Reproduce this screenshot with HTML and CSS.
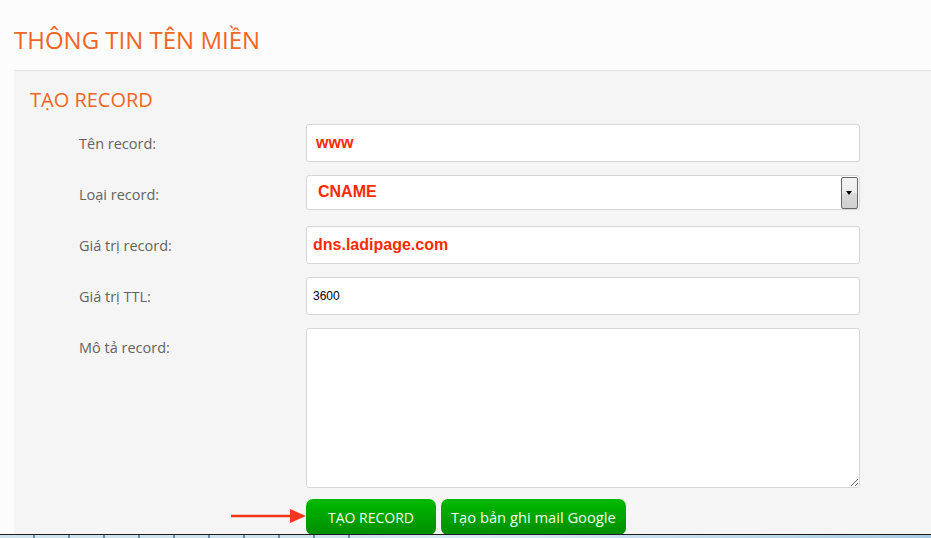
FILE: index.html
```html
<!DOCTYPE html>
<html lang="vi">
<head>
    <meta charset="UTF-8">
    <meta name="viewport" content="width=device-width, initial-scale=1.0">
    <title>Thông tin tên miền</title>
    <link rel="stylesheet" href="styles.css">
</head>
<body>
    <div class="page">
        <div class="page-header">
            <h1>THÔNG TIN TÊN MIỀN</h1>
        </div>

        <div class="panel">
            <h2>TẠO RECORD</h2>

            <div class="form-row">
                <label for="recordName">Tên record:</label>
                <input type="text" id="recordName" class="field field-red field-www" value="www">
            </div>

            <div class="form-row">
                <label>Loại record:</label>
                <div class="select-box">
                    <span class="select-value">CNAME</span>
                    <span class="select-btn"></span>
                </div>
            </div>

            <div class="form-row">
                <label for="recordValue">Giá trị record:</label>
                <input type="text" id="recordValue" class="field field-red" value="dns.ladipage.com">
            </div>

            <div class="form-row">
                <label for="recordTtl">Giá trị TTL:</label>
                <input type="text" id="recordTtl" class="field" value="3600">
            </div>

            <div class="form-row">
                <label for="recordDesc">Mô tả record:</label>
                <textarea id="recordDesc" class="field field-area"></textarea>
            </div>

            <div class="actions">
                <!-- mũi tên chú thích -->
                <svg class="arrow" width="76" height="16" viewBox="0 0 76 16">
                    <line x1="0" y1="8" x2="62" y2="8" stroke="#f2361c" stroke-width="2.5"/>
                    <polygon points="59,1 75,8 59,15" fill="#f2361c"/>
                </svg>
                <button class="green-btn">TẠO RECORD</button>
                <button class="green-btn green-btn-wide">Tạo bản ghi mail Google</button>
            </div>
        </div>
    </div>

    <div class="taskbar"></div>
</body>
</html>
```

FILE: styles.css
```css
html, body {
    height: 100%;
}
body {
    margin: 0;
    background-color: #fcfcfc;
    font-family: "Open Sans", "Noto Sans", Arial, sans-serif;
    overflow: hidden;
}
.page {
    display: flex;
    flex-direction: column;
    height: 100%;
    margin-left: 14px;
}
.page-header {
    padding: 24px 0 14px;
    border-bottom: 1px solid #e3e3e3;
}
h1 {
    margin: 0;
    font-size: 24px;
    line-height: 32px;
    font-weight: normal;
    color: #f26522;
}
.panel {
    flex: 1;
    background-color: #f5f5f5;
    padding: 15px 0 0 16px;
}
h2 {
    margin: 0 0 11px;
    font-size: 20px;
    line-height: 27px;
    font-weight: normal;
    color: #f26522;
}
.form-row {
    display: flex;
    align-items: flex-start;
    padding-left: 49px;
    margin-bottom: 13px;
}
.form-row label {
    width: 227px;
    flex-shrink: 0;
    height: 38px;
    padding-top: 1px;
    box-sizing: border-box;
    line-height: 38px;
    font-size: 14.5px;
    color: #636363;
}
.field {
    box-sizing: border-box;
    width: 554px;
    height: 38px;
    margin: 0;
    padding: 0 6px;
    border: 1px solid #d6d6d6;
    border-radius: 3px;
    background-color: #fff;
    font-family: "Liberation Sans", Arial, sans-serif;
    font-size: 12px;
    color: #000;
    outline: none;
}
.field-red {
    font-size: 16px;
    font-weight: bold;
    color: #ff2a00;
}
.field-www {
    padding-left: 9px;
}
.field-area {
    height: 160px;
    resize: both;
}
.select-box {
    box-sizing: border-box;
    width: 554px;
    height: 35px;
    display: flex;
    align-items: center;
    justify-content: space-between;
    padding: 0 1px 0 11px;
    border: 1px solid #d6d6d6;
    border-radius: 3px;
    background-color: #fff;
}
.select-value {
    font-family: "Liberation Sans", Arial, sans-serif;
    font-size: 16px;
    font-weight: bold;
    color: #ff2a00;
    margin-top: -2px;
}
.select-btn {
    box-sizing: border-box;
    width: 17px;
    height: 32px;
    border: 1px solid #666;
    border-radius: 2px;
    background: linear-gradient(#f4f4f4 0%, #ececec 48%, #dadada 52%, #cfcfcf 100%);
    position: relative;
}
.select-btn::after {
    content: "";
    position: absolute;
    left: 4px;
    top: 13px;
    border-left: 3.5px solid transparent;
    border-right: 3.5px solid transparent;
    border-top: 4px solid #000;
}
.actions {
    position: relative;
    display: flex;
    gap: 5px;
    padding-left: 276px;
    margin-top: -2px;
}
.arrow {
    position: absolute;
    left: 201px;
    top: 9px;
}
.green-btn {
    height: 36px;
    padding: 0 22px;
    border: none;
    border-radius: 7px;
    background: linear-gradient(#00ba00, #008c00);
    font-family: "Open Sans", Arial, sans-serif;
    font-size: 14px;
    color: #f2ffe8;
    cursor: pointer;
}
.green-btn-wide {
    padding: 0 10px;
    font-size: 14.7px;
}
.taskbar {
    position: fixed;
    left: 0;
    right: 0;
    bottom: 0;
    height: 3px;
    border-top: 1px solid #1c1c1c;
    background:
        repeating-linear-gradient(to right, #cfe3ef 0, #cfe3ef 33px, #6b8ea6 33px, #6b8ea6 35px) left / 363px 100% no-repeat,
        linear-gradient(to right, #a9cbe2, #d8ebf6 50%, #a9cbe2);
}
```
